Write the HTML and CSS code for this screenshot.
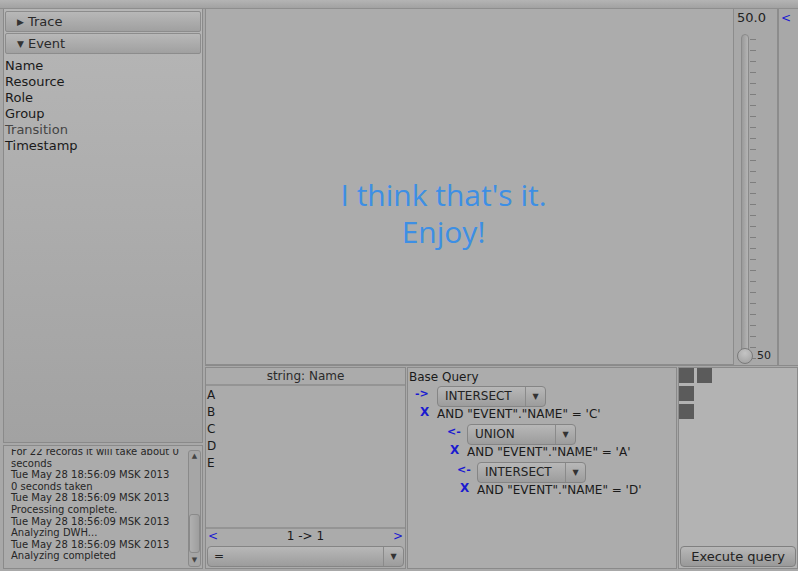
FILE: index.html
```html
<!DOCTYPE html>
<html>
<head>
<meta charset="utf-8">
<link rel="stylesheet" href="styles.css">
</head>
<body>
<div class="topbar"></div>
<div class="main">
  <div class="leftcol">
    <div class="tree">
      <div class="hdr"><span class="tri">&#9654;</span>Trace</div>
      <div class="hdr"><span class="tri down">&#9660;</span>Event</div>
      <div class="items">
        <div>Name</div>
        <div>Resource</div>
        <div>Role</div>
        <div>Group</div>
        <div class="dim">Transition</div>
        <div>Timestamp</div>
      </div>
    </div>
    <div class="log">
      <div class="logview">
        <div class="logtext">
          <div>For 22 records it will take about 0</div>
          <div>seconds</div>
          <div>Tue May 28 18:56:09 MSK 2013</div>
          <div>0 seconds taken</div>
          <div>Tue May 28 18:56:09 MSK 2013</div>
          <div>Processing complete.</div>
          <div>Tue May 28 18:56:09 MSK 2013</div>
          <div>Analyzing DWH...</div>
          <div>Tue May 28 18:56:09 MSK 2013</div>
          <div>Analyzing completed</div>
        </div>
      </div>
      <div class="scroll">
        <div class="sbtn">&#9650;</div>
        <div class="strack"><div class="thumb"></div></div>
        <div class="sbtn">&#9660;</div>
      </div>
    </div>
  </div>
  <div class="rightcol">
    <div class="top">
      <div class="canvas">
        <div class="msg">I think that's it.<br>Enjoy!</div>
      </div>
      <div class="slider">
        <div class="sval">50.0</div>
        <div class="sbody">
          <div class="track"></div>
          <div class="ticks">
            <i></i><i></i><i></i><i></i><i></i><i></i><i></i><i></i><i></i><i></i>
            <i></i><i></i><i></i><i></i><i></i><i></i><i></i><i></i><i></i><i></i>
            <i></i><i></i><i></i><i></i><i></i><i></i><i></i><i></i><i></i><i></i>
          </div>
          <div class="knob"></div>
          <div class="smin">50</div>
        </div>
      </div>
      <div class="lesscol">&lt;</div>
    </div>
    <div class="bottom">
      <div class="listpanel">
        <div class="lhead">string: Name</div>
        <div class="litems">
          <div>A</div><div>B</div><div>C</div><div>D</div><div>E</div>
        </div>
        <div class="lnav"><span class="blue">&lt;</span><span>1 -&gt; 1</span><span class="blue">&gt;</span></div>
        <div class="combo wide"><span class="ctext">=</span><span class="carrow">&#9660;</span></div>
      </div>
      <div class="query">
        <div class="qtitle">Base Query</div>
        <div class="qrow"><span class="arrow">-&gt;</span><div class="combo q"><span class="ctext">INTERSECT</span><span class="carrow">&#9660;</span></div></div>
        <div class="qcond"><span class="x">X</span><span>AND "EVENT"."NAME" = 'C'</span></div>
        <div class="lvl">
          <div class="qrow"><span class="arrow">&lt;-</span><div class="combo q"><span class="ctext">UNION</span><span class="carrow">&#9660;</span></div></div>
          <div class="qcond"><span class="x">X</span><span>AND "EVENT"."NAME" = 'A'</span></div>
          <div class="lvl2">
            <div class="qrow"><span class="arrow">&lt;-</span><div class="combo q"><span class="ctext">INTERSECT</span><span class="carrow">&#9660;</span></div></div>
            <div class="qcond"><span class="x">X</span><span>AND "EVENT"."NAME" = 'D'</span></div>
          </div>
        </div>
      </div>
      <div class="exec">
        <div class="squares">
          <div class="sq"></div><div class="sq"></div>
          <div class="sq"></div><div></div>
          <div class="sq"></div><div></div>
        </div>
        <div class="btn">Execute query</div>
      </div>
    </div>
  </div>
</div>
</body>
</html>
```
FILE: styles.css
```css
* { box-sizing: border-box; }
html, body { margin: 0; padding: 0; }
body {
  width: 798px; height: 571px; overflow: hidden;
  background: #a8a8a8;
  font-family: "DejaVu Sans", sans-serif;
  font-size: 12px;
  color: #1a1a1a;
}
.topbar {
  height: 9px;
  background: linear-gradient(#b4b4b4, #a2a2a2);
  border-bottom: 1px solid #8e8e8e;
}
.main { display: flex; height: 562px; }
.leftcol {
  width: 203px; padding-left: 3px;
  display: flex; flex-direction: column;
}
.tree {
  height: 434px;
  border: 1px solid #8a8a8a;
  border-top: none;
  background: linear-gradient(#b6b6b6, #a2a2a2);
  padding: 2px 0 0 0;
}
.hdr {
  height: 21px; margin: 0 1px 1px 1px;
  border: 1px solid #8c8c8c;
  border-radius: 2px;
  background: linear-gradient(#b8b8b8, #a0a0a0);
  line-height: 19px; font-size: 13px;
  color: #2a2a2a;
  padding-left: 11px;
}
.tri { font-size: 9px; margin-right: 4px; color: #333; position: relative; top: -1px; }
.items { padding-top: 3px; font-size: 13px; line-height: 16px; }
.items div { padding-left: 1px; }
.items .dim { color: #444; }
.log {
  margin-top: 2px;
  height: 124px;
  border: 1px solid #8a8a8a;
  display: flex;
  background: #ababab;
  overflow: hidden;
}
.logview { flex: 1; margin-top: 3px; overflow: hidden; }
.logtext {
  padding-left: 7px; font-size: 10px; line-height: 11.6px;
  color: #262626; margin-top: -3px; white-space: nowrap;
}
.scroll {
  width: 13px; margin: 4px 1px 1px 0;
  border: 1px solid #8a8a8a; border-radius: 3px;
  display: flex; flex-direction: column;
  background: #a6a6a6;
}
.sbtn { height: 11px; font-size: 7px; text-align: center; line-height: 11px; color: #444; }
.strack { flex: 1; position: relative; }
.thumb {
  position: absolute; left: 0; right: 0; top: 52px; bottom: 2px;
  background: linear-gradient(90deg, #b0b0b0, #9e9e9e);
  border: 1px solid #8a8a8a; border-radius: 3px;
}
.rightcol { flex: 1; display: flex; flex-direction: column; padding-left: 2px; }
.top { height: 357px; display: flex; border-bottom: 1px solid #8a8a8a; }
.canvas {
  flex: 1;
  border: 1px solid #8c8c8c;
  border-top: none;
  background: #acacac;
  display: flex; align-items: center; justify-content: center;
}
.msg {
  font-family: "Open Sans", sans-serif;
  font-size: 30px; line-height: 37px;
  color: #3d8fe4; text-align: center;
  margin-top: 52px; margin-right: 52px;
}
.slider {
  width: 45px; border-right: 2px solid #8c8c8c;
  position: relative;
}
.sval { font-size: 13px; padding-left: 3px; line-height: 18px; color: #222; }
.sbody { position: relative; height: 336px; }
.track {
  position: absolute; left: 7px; top: 7px; width: 8px; height: 324px;
  border: 1px solid #8a8a8a; border-radius: 4px;
  background: linear-gradient(90deg, #9a9a9a, #b4b4b4);
}
.ticks {
  position: absolute; left: 16px; top: 12px; width: 6px;
  display: flex; flex-direction: column; gap: 10px;
}
.ticks i { display: block; height: 1px; width: 6px; background: #7e7e7e; }
.knob {
  position: absolute; left: 3px; top: 321px; width: 16px; height: 16px;
  border-radius: 50%; border: 1px solid #7a7a7a;
  background: radial-gradient(circle at 50% 30%, #c4c4c4, #9e9e9e);
}
.smin { position: absolute; left: 23px; top: 322px; font-size: 11px; color: #222; }
.lesscol { width: 19px; color: #1a1ad0; font-size: 12px; padding: 1px 0 0 2px; line-height: 16px; }
.bottom { flex: 1; display: flex; padding-top: 1px; }
.listpanel {
  width: 201px; margin-bottom: 2px;
  border: 1px solid #8a8a8a;
  display: flex; flex-direction: column;
  background: #ababab;
}
.lhead {
  height: 18px; text-align: center; line-height: 17px;
  border-bottom: 2px solid #949494; color: #2a2a2a; font-size: 12px;
}
.litems { flex: 1; font-size: 12px; line-height: 17px; padding-left: 1px; padding-top: 1px; }
.lnav {
  height: 17px; border-top: 2px solid #949494;
  display: flex; justify-content: space-between; padding: 0 2px; line-height: 14px;
  font-size: 12px;
}
.blue { color: #1a1ad0; }
.combo {
  display: flex; height: 21px;
  border: 1px solid #858585; border-radius: 4px;
  background: linear-gradient(#b8b8b8, #9c9c9c);
  color: #222;
}
.combo.wide { margin: 2px 1px 1px 1px; }
.ctext { flex: 1; padding-left: 6px; line-height: 19px; }
.carrow {
  width: 20px; border-left: 1px solid #8a8a8a; font-size: 8px;
  text-align: center; line-height: 19px; color: #333;
}
.query {
  width: 270px; margin-left: 1px; margin-bottom: 2px;
  border: 1px solid #8a8a8a;
  background: #acacac;
}
.qtitle { line-height: 16px; font-size: 12px; padding-top: 1px; padding-left: 1px; }
.qrow { display: flex; align-items: center; height: 21px; margin-top: 1px; }
.arrow { width: 29px; flex: none; color: #1a1ad0; font-weight: bold; font-size: 11px; padding-left: 7px; position: relative; top: -3px; }
.combo.q { width: 109px; height: 21px; }
.combo.q .ctext { padding-left: 7px; }
.qcond { display: flex; height: 16px; line-height: 14px; }
.x { width: 29px; flex: none; color: #1a1ad0; font-weight: bold; padding-left: 12px; position: relative; top: -2px; }
.lvl { padding-left: 30px; }
.lvl .arrow { padding-left: 9px; }
.lvl2 { padding-left: 10px; }
.exec {
  flex: 1; margin-left: 1px; margin-bottom: 2px;
  border: 1px solid #8a8a8a;
  display: flex; flex-direction: column;
  background: #b3b3b3;
}
.squares {
  flex: 1; display: grid; grid-template-columns: 15px 15px; grid-auto-rows: 15px;
  gap: 3px; align-content: start; padding: 0;
}
.sq { background: #5b5b5b; }
.btn {
  height: 21px; margin: 0 1px 1px 1px;
  border: 1px solid #808080; border-radius: 4px;
  background: linear-gradient(#b8b8b8, #999);
  text-align: center; line-height: 19px; font-size: 13px; color: #222;
}
```
